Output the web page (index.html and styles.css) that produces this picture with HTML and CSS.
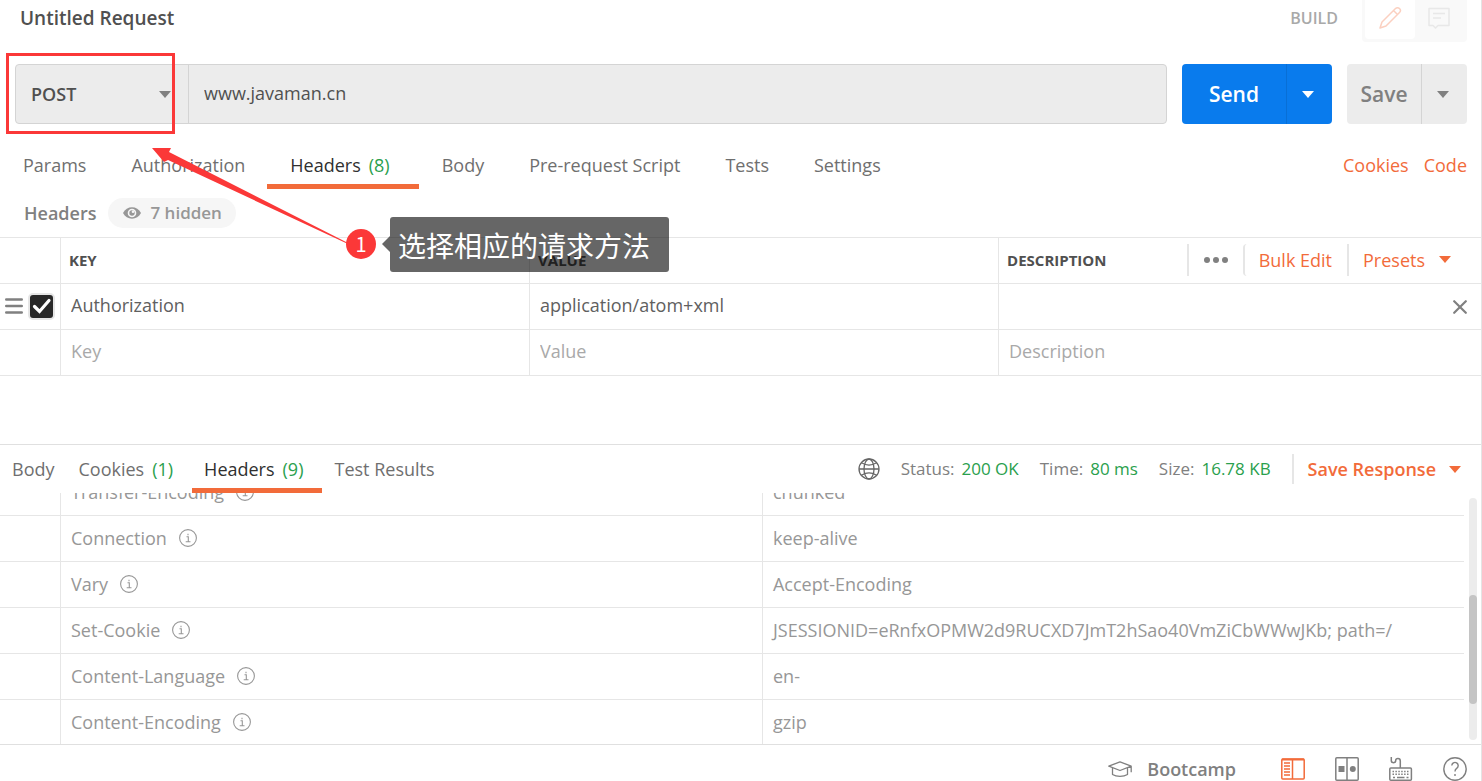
FILE: index.html
```html
<!DOCTYPE html>
<html lang="en">
<head>
<meta charset="utf-8">
<title>Untitled Request</title>
<link rel="stylesheet" href="styles.css">
</head>
<body>
<div class="app">
  <header class="titlebar">
    <h1 class="title">Untitled Request</h1>
    <span class="mode">BUILD</span>
    <div class="mode-switch">
      <button class="mode-btn mode-btn-active" aria-label="Edit">
        <svg width="24" height="24" viewBox="0 0 24 24" fill="none" stroke="#fbd0c0" stroke-width="1.5" stroke-linejoin="round"><path d="M2 22l2-6L17.500 2.500a2.600 2.600 0 0 1 4 4L8 20l-6 2zM15.500 4.500l4 4"/></svg>
      </button>
      <button class="mode-btn" aria-label="Comments">
        <svg width="24" height="24" viewBox="0 0 24 24" fill="none" stroke="#e8e8e8" stroke-width="1.500" stroke-linejoin="round"><path d="M2 2.500h20v17H11l-2.500 2.500L6 19.500H2zM6 7.500h12M6 12h8"/></svg>
      </button>
    </div>
  </header>

  <form class="request-bar" onsubmit="return false">
    <div class="url-group">
      <div class="method">
        <select class="method-select" aria-label="Method"><option>POST</option></select>
        <i class="caret method-caret"></i>
      </div>
      <input class="url" type="text" value="www.javaman.cn" aria-label="Request URL">
    </div>
    <div class="split split-send">
      <button class="split-main">Send</button>
      <button class="split-more" aria-label="Send options"><i class="caret"></i></button>
    </div>
    <div class="split split-save">
      <button class="split-main">Save</button>
      <button class="split-more" aria-label="Save options"><i class="caret"></i></button>
    </div>
  </form>

  <nav class="tabs request-tabs">
    <button class="tab">Params</button>
    <button class="tab">Authorization</button>
    <button class="tab tab-active">Headers<span class="count">(8)</span></button>
    <button class="tab">Body</button>
    <button class="tab">Pre-request Script</button>
    <button class="tab">Tests</button>
    <button class="tab">Settings</button>
    <div class="tab-links">
      <a class="link" href="#">Cookies</a>
      <a class="link" href="#">Code</a>
    </div>
  </nav>

  <div class="subhead">
    <h2 class="subhead-title">Headers</h2>
    <button class="hidden-pill">
      <svg width="18" height="12" viewBox="0 0 18 12"><path d="M0 6C2 2.300 5.200.3 9 .3S16 2.300 18 6c-2 3.700-5.200 5.700-9 5.700S2 9.700 0 6z" fill="#979797"/><circle cx="9" cy="6" r="4.300" fill="#f6f6f6"/><circle cx="9" cy="6" r="2.700" fill="#979797"/><circle cx="10" cy="4.800" r="1.300" fill="#f6f6f6"/></svg>
      7 hidden
    </button>
  </div>

  <table class="grid request-grid">
    <colgroup><col class="col-tools"><col class="col-third"><col class="col-third"><col></colgroup>
    <thead>
      <tr>
        <th></th><th>KEY</th><th>VALUE</th>
        <th>
          <div class="desc-head">
            <span>DESCRIPTION</span>
            <div class="desc-tools">
              <button class="tool tool-more" aria-label="More"><svg width="24" height="6" viewBox="0 0 24 6" fill="#808080"><circle cx="3" cy="3" r="3"/><circle cx="12" cy="3" r="3"/><circle cx="21" cy="3" r="3"/></svg></button>
              <button class="tool tool-bulk">Bulk Edit</button>
              <button class="tool tool-presets">Presets<i class="caret"></i></button>
            </div>
          </div>
        </th>
      </tr>
    </thead>
    <tbody>
      <tr>
        <td>
          <div class="row-tools">
            <svg width="18" height="16" viewBox="0 0 18 16" stroke="#808080" stroke-width="2.400" stroke-linecap="round"><path d="M1.200 1.500h15.600M1.200 8h15.600M1.200 14.500h15.600"/></svg>
            <span class="check">
              <input class="check-input" type="checkbox" checked aria-label="Include header">
              <svg class="check-mark" width="20" height="16" viewBox="0 0 20 16" fill="none" stroke="#fff" stroke-width="3.200" stroke-linecap="round"><path d="M2.500 8.500l5 5L17 2.500"/></svg>
            </span>
          </div>
        </td>
        <td><input class="cell" type="text" value="Authorization" aria-label="Key"></td>
        <td><input class="cell" type="text" value="application/atom+xml" aria-label="Value"></td>
        <td>
          <div class="desc-cell">
            <input class="cell" type="text" aria-label="Description">
            <button class="remove" aria-label="Remove"><svg width="14" height="14" viewBox="0 0 14 14" stroke="#808080" stroke-width="2.200" stroke-linecap="round"><path d="M1.200 1.200l11.600 11.600M12.800 1.200L1.200 12.800"/></svg></button>
          </div>
        </td>
      </tr>
      <tr>
        <td></td>
        <td><input class="cell" type="text" placeholder="Key" aria-label="New key"></td>
        <td><input class="cell" type="text" placeholder="Value" aria-label="New value"></td>
        <td><input class="cell" type="text" placeholder="Description" aria-label="New description"></td>
      </tr>
    </tbody>
  </table>

  <section class="response">
    <div class="tabs response-tabs">
      <button class="tab">Body</button>
      <button class="tab">Cookies<span class="count">(1)</span></button>
      <button class="tab tab-active">Headers<span class="count">(9)</span></button>
      <button class="tab">Test Results</button>
      <div class="meta">
        <svg class="globe" width="22" height="22" viewBox="0 0 22 22" fill="none" stroke="#666" stroke-width="1.300"><circle cx="11" cy="11" r="10"/><ellipse cx="11" cy="11" rx="5" ry="10"/><path d="M3.500 4.800c4.500 2.800 10.500 2.800 15 0M3.500 17.200c4.500-2.800 10.500-2.800 15 0M1 11h20"/></svg>
        <span>Status:<b class="meta-value">200 OK</b></span>
        <span>Time:<b class="meta-value">80 ms</b></span>
        <span>Size:<b class="meta-value">16.78 KB</b></span>
        <button class="save-response">Save Response<i class="caret"></i></button>
      </div>
    </div>
    <div class="response-body">
      <div class="rows">
        <table class="grid response-grid">
          <colgroup><col class="col-tools"><col class="col-name"><col></colgroup>
          <tbody>
            <tr><td></td><td><span class="name">Transfer-Encoding<svg class="info" viewBox="0 0 18 18"><use href="#info"/></svg></span></td><td>chunked</td></tr>
            <tr><td></td><td><span class="name">Connection<svg class="info" viewBox="0 0 18 18"><use href="#info"/></svg></span></td><td>keep-alive</td></tr>
            <tr><td></td><td><span class="name">Vary<svg class="info" viewBox="0 0 18 18"><use href="#info"/></svg></span></td><td>Accept-Encoding</td></tr>
            <tr><td></td><td><span class="name">Set-Cookie<svg class="info" viewBox="0 0 18 18"><use href="#info"/></svg></span></td><td>JSESSIONID=eRnfxOPMW2d9RUCXD7JmT2hSao40VmZiCbWWwJKb; path=/</td></tr>
            <tr><td></td><td><span class="name">Content-Language<svg class="info" viewBox="0 0 18 18"><use href="#info"/></svg></span></td><td>en-</td></tr>
            <tr><td></td><td><span class="name">Content-Encoding<svg class="info" viewBox="0 0 18 18"><use href="#info"/></svg></span></td><td>gzip</td></tr>
          </tbody>
        </table>
      </div>
      <div class="scroll-track"><div class="scroll-space"></div><div class="scroll-thumb"></div></div>
    </div>
  </section>

  <footer class="statusbar">
    <button class="bootcamp">
      <svg width="24" height="16" viewBox="0 0 24 16" fill="none" stroke="#808080" stroke-width="1.300" stroke-linejoin="round"><path d="M12 .8L.8 5.200 12 9.500l11.200-4.300zM4.500 7v6.500c4 2.400 11 2.400 15 0V7M23.200 5.200v6"/></svg>
      Bootcamp
    </button>
    <button class="status-icon" aria-label="Sidebar"><svg width="24" height="24" viewBox="0 0 24 24" fill="none" stroke="#f26b3a" stroke-width="1.500"><rect x="0.800" y="2" width="22.400" height="20" rx="1"/><path d="M1 2.500h22" stroke-width="2"/><path d="M11.500 2v20M3 6h6M3 9h6M3 12h6M3 15h6M3 18h6"/></svg></button>
    <button class="status-icon" aria-label="Two-pane view"><svg width="24" height="24" viewBox="0 0 24 24" fill="none" stroke="#808080" stroke-width="1.500"><rect x="0.800" y="0.800" width="22.400" height="22.400" rx="1"/><path d="M12 1v22"/><path d="M3.500 9h6v6h-6z" fill="#808080" stroke="none"/><circle cx="17.800" cy="12" r="3" fill="#808080" stroke="none"/></svg></button>
    <button class="status-icon" aria-label="Keyboard shortcuts"><svg width="24" height="24" viewBox="0 0 24 24" fill="none" stroke="#808080" stroke-width="1.500"><rect x="0.800" y="11" width="21.600" height="12.200" rx="1"/><path d="M2.300 0v3.500a2.200 2.200 0 0 0 4.400 0C6.700 1.800 7.500 1.500 9 1.500s2.300.8 2.300 2.500v7"/><path d="M3.500 14.500h16M3.500 17.300h16" stroke-dasharray="1.500 1.400"/><path d="M4 20.500h2M8 20.500h7.500M17.500 20.500h2"/></svg></button>
    <button class="status-icon" aria-label="Help"><svg width="24" height="24" viewBox="0 0 24 24" fill="none" stroke="#808080" stroke-width="1.400"><circle cx="12" cy="12" r="11.200"/><path d="M8.800 8.500a3.200 3.200 0 1 1 4.900 2.800c-1.200.8-1.700 1.400-1.700 3.200M12 17v2"/></svg></button>
  </footer>

  <div class="callout-box"></div>
  <svg class="callout-arrow" width="196" height="98" viewBox="0 0 196 98"><path d="M0 0h19l-2 4L196 95v1L16 12l-4 2z" fill="#fb3838"/></svg>
  <span class="callout-number">1</span>
  <div class="callout-label" lang="zh-CN">选择相应的请求方法</div>
</div>

<svg class="defs" width="0" height="0"><defs><g id="info" fill="none" stroke="#979797"><circle cx="9" cy="9" r="8.400" stroke-width="1.100"/><path d="M7.500 7.700h1.800v4.800M6.700 12.800h4.800M9 4.700v1.600" stroke-width="1.100"/></g></defs></svg>
</body>
</html>
```
FILE: styles.css
```css
* { box-sizing: border-box; }

body {
  margin: 0;
  background: #fff;
  color: #6f6f6f;
  font: 18px/24px "Open Sans", "Noto Sans CJK SC", sans-serif;
}

button, input, select {
  margin: 0;
  padding: 0;
  border: 0;
  background: none;
  color: inherit;
  font: inherit;
  border-radius: 0;
}

svg { display: block; flex: none; }
a { text-decoration: none; }
.defs { position: absolute; }

.app {
  position: relative;
  display: flex;
  flex-direction: column;
  height: 100vh;
  border-right: 1px solid #e4e4e4;
  overflow: hidden;
}

.caret {
  flex: none;
  width: 0;
  border: 6px solid transparent;
  border-top: 7px solid currentColor;
  border-bottom: 0;
}

/* Title bar */
.titlebar {
  display: flex;
  align-items: flex-start;
  height: 64px;
  padding: 0 14px 0 20px;
}
.title {
  flex: 1;
  margin: 0;
  padding-top: 6px;
  color: #505050;
  font-size: 19px;
  font-weight: 600;
}
.mode {
  padding: 6px 24px 0 0;
  color: #a9a9a9;
  font-size: 16px;
  font-weight: 600;
}
.mode-switch {
  display: flex;
  width: 105px;
  padding: 0 3px 3px;
  border-radius: 0 0 4px 4px;
  background: #f9f9f9;
}
.mode-btn {
  display: flex;
  flex: 1;
  align-items: center;
  justify-content: center;
  height: 39px;
  padding-bottom: 3px;
  border-radius: 0 0 4px 4px;
}
.mode-btn-active { background: #fff; }

/* Request bar */
.request-bar {
  display: flex;
  gap: 15px;
  height: 60px;
  padding: 0 14px 0 15px;
}
.url-group {
  display: flex;
  flex: 1;
  border: 1px solid #d4d4d4;
  border-radius: 4px;
  background: #ececec;
}
.method {
  display: flex;
  align-items: center;
  width: 173px;
  padding-right: 17px;
  border-right: 1px solid #d4d4d4;
  color: #808080;
}
.method-select {
  flex: 1;
  height: 100%;
  padding-left: 15px;
  appearance: none;
  color: #505050;
  font-weight: 600;
}
.url {
  flex: 1;
  padding: 0 15px 2px;
  color: #505050;
}
.split {
  display: flex;
  border-radius: 4px;
  font-size: 21px;
  font-weight: 600;
}
.split-main { flex: 1; }
.split-more {
  display: flex;
  align-items: center;
  justify-content: center;
  width: 46px;
  padding-right: 3px;
  border-left: 1px solid;
}
.split-send { width: 150px; background: #097bed; color: #fff; }
.split-send .split-more { border-color: #086fd6; }
.split-save { width: 120px; background: #ececec; color: #808080; }
.split-save .split-more { border-color: #d4d4d4; }

/* Tabs */
.tabs { display: flex; flex: none; }
.tab {
  border-bottom: 5px solid transparent;
  white-space: nowrap;
}
.tab-active {
  border-color: #f26b3a;
  color: #303030;
}
.count {
  margin: 0 7px 0 8px;
  color: #2aa04d;
}
.request-tabs {
  height: 65px;
  padding-right: 14px;
}
.request-tabs .tab { padding: 22px 22px 0 23px; }
.tab-links {
  display: flex;
  gap: 15px;
  margin-left: auto;
  padding-top: 29px;
}
.link { color: #f26b3a; }

/* Headers sub-bar */
.subhead {
  display: flex;
  align-items: center;
  gap: 12px;
  height: 48px;
  padding-left: 24px;
}
.subhead-title {
  margin: 0;
  color: #808080;
  font-size: 18px;
  font-weight: 600;
}
.hidden-pill {
  display: flex;
  align-items: center;
  gap: 9px;
  height: 30px;
  padding: 0 14px 0 15px;
  border-radius: 15px;
  background: #f6f6f6;
  color: #979797;
  font-size: 17px;
  font-weight: 600;
}

/* Tables */
.grid {
  flex: none;
  width: 100%;
  border-spacing: 0;
  table-layout: fixed;
}
.grid th, .grid td {
  height: 46px;
  padding: 0;
  border-right: 1px solid #e6e6e6;
  border-bottom: 1px solid #e6e6e6;
  text-align: left;
}
.grid th:last-child, .grid td:last-child { border-right: 0; }
.col-tools { width: 61px; }
.col-third { width: 31.67%; }
.col-name { width: 47.95%; }
.request-grid { border-top: 1px solid #e6e6e6; }
.grid th {
  padding: 0 0 2px 8px;
  color: #505050;
  font-size: 15px;
  font-weight: 700;
}
.cell {
  display: block;
  width: 100%;
  height: 44px;
  padding: 0 10px 3px;
  color: #606060;
}
.cell::placeholder { color: #a9a9a9; opacity: 1; }
.desc-head, .desc-cell, .desc-tools, .row-tools {
  display: flex;
  align-items: center;
}
.desc-head { justify-content: space-between; }
.tool {
  height: 32px;
  border-left: 2px solid #e6e6e6;
  color: #f26b3a;
  font-size: 18px;
  font-weight: 400;
}
.tool-more { padding: 0 15px; }
.tool-bulk { padding: 0 15px 0 14px; border-radius: 4px; }
.tool-presets {
  display: flex;
  align-items: center;
  gap: 14px;
  padding: 0 30px 0 14px;
}
.remove { padding: 8px 14px; }
.row-tools { gap: 5px; padding: 0 0 1px 5px; }
.check {
  display: grid;
  place-items: center;
}
.check-input, .check-mark { grid-area: 1 / 1; }
.check-input {
  width: 27px;
  height: 27px;
  appearance: none;
  border: 2px solid #e6e6e6;
  border-radius: 5px;
  background: #282828;
}
.check-mark { pointer-events: none; z-index: 1; }

/* Response */
.response {
  display: flex;
  flex: 1;
  flex-direction: column;
  min-height: 0;
  margin-top: 68px;
  border-top: 1px solid #e0e0e0;
}
.response-tabs { height: 48px; }
.response-tabs .tab { padding: 5px 12px 0; }
.meta {
  display: flex;
  align-items: center;
  gap: 21px;
  margin-left: auto;
  padding-right: 20px;
  color: #808080;
  font-size: 17px;
}
.meta-value {
  margin-left: 7px;
  color: #2aa04d;
  font-weight: 400;
}
.save-response {
  display: flex;
  align-items: center;
  gap: 13px;
  height: 30px;
  padding-left: 14px;
  border-left: 2px solid #e6e6e6;
  color: #f26b3a;
  font-size: 18px;
  font-weight: 600;
}
.response-body {
  display: flex;
  flex: 1;
  min-height: 0;
  gap: 5px;
  padding-right: 4px;
}
.rows {
  display: flex;
  flex: 1;
  flex-direction: column;
  justify-content: flex-end;
  min-width: 0;
  overflow: hidden;
}
.response-grid { color: #979797; }
.response-grid td { padding: 0 0 1px 10px; }
.response-grid tr:last-child td { height: 44px; border-bottom: 0; }
.name {
  display: flex;
  align-items: center;
  gap: 12px;
}
.info { width: 18px; height: 18px; }
.scroll-track {
  display: flex;
  flex-direction: column;
  width: 8px;
  margin: 5px 0 4px;
  border-radius: 4px;
  background: #ececec;
}
.scroll-space { height: 40%; }
.scroll-thumb {
  height: 45%;
  border-radius: 4px;
  background: #c4c4c4;
}

/* Status bar */
.statusbar {
  display: flex;
  justify-content: flex-end;
  gap: 30px;
  padding: 12px 14px 0 0;
  border-top: 1px solid #e0e0e0;
}
.bootcamp {
  display: flex;
  align-items: center;
  gap: 15px;
  margin-right: 15px;
  color: #808080;
  font-weight: 600;
}
.status-icon { height: 24px; }

/* Callout drawn over the request bar */
.callout-box, .callout-arrow, .callout-number, .callout-label { position: absolute; }
.callout-box {
  left: 6px;
  top: 53px;
  width: 169px;
  height: 81px;
  border: 3px solid #fb3838;
}
.callout-arrow { left: 152px; top: 148px; }
.callout-number {
  left: 346px;
  top: 229px;
  width: 30px;
  border-radius: 50%;
  background: #fb3838;
  color: #fff;
  font: 20px/30px "Noto Sans CJK SC", sans-serif;
  text-align: center;
}
.callout-label {
  left: 390px;
  top: 217px;
  padding: 2px 19px 0 8px;
  border-radius: 3px;
  background: rgba(0, 0, 0, 0.6);
  color: #fff;
  font: 28px/53px "Noto Sans CJK SC", sans-serif;
}
.callout-label::before {
  content: "";
  position: absolute;
  right: 100%;
  top: 19px;
  border: 8px solid transparent;
  border-right-color: rgba(0, 0, 0, 0.6);
  border-left: 0;
}
```
